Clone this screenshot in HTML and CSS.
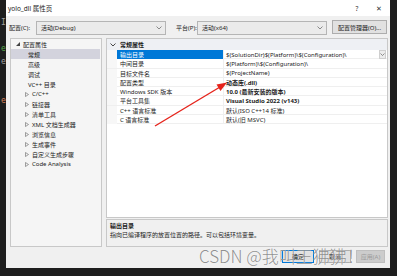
FILE: index.html
```html
<!DOCTYPE html>
<html lang="zh-CN">
<head>
    <meta charset="UTF-8">
    <title>yolo_dll 属性页</title>
    <link rel="stylesheet" href="styles.css">
</head>
<body>
<div class="screen">
    <div class="editor-edge">
        <span class="code">I</span>
        <span class="code"></span>
        <span class="code green">e</span>
        <span class="code">e</span>
        <span class="code"></span>
        <span class="code"></span>
        <span class="code orange">e</span>
    </div>

    <div class="dialog">
        <div class="titlebar">
            <span class="title">yolo_dll 属性页</span>
            <span class="tb-btn help">?</span>
            <span class="tb-btn close">✕</span>
        </div>

        <div class="toolbar">
            <span class="tb-label">配置(C):</span>
            <div class="combo">
                <span>活动(Debug)</span>
                <svg class="chev" width="6" height="4" viewBox="0 0 6 4"><path d="M0.5 0.5 L3 3 L5.5 0.5" fill="none" stroke="#707070" stroke-width="0.8"/></svg>
            </div>
            <span class="tb-label platform">平台(P):</span>
            <div class="combo">
                <span>活动(x64)</span>
                <svg class="chev" width="6" height="4" viewBox="0 0 6 4"><path d="M0.5 0.5 L3 3 L5.5 0.5" fill="none" stroke="#707070" stroke-width="0.8"/></svg>
            </div>
            <button class="btn manager">配置管理器(O)...</button>
        </div>

        <div class="main">
            <ul class="tree">
                <li class="node root">
                    <svg class="expander" width="4" height="4" viewBox="0 0 4 4"><polygon points="4,0 4,4 0,4" fill="#444"/></svg>
                    配置属性
                </li>
                <li class="node leaf selected">常规</li>
                <li class="node leaf">高级</li>
                <li class="node leaf">调试</li>
                <li class="node leaf">VC++ 目录</li>
                <li class="node branch"><svg class="expander" width="4" height="5" viewBox="0 0 4 5"><polygon points="0.5,0.5 3.5,2.5 0.5,4.5" fill="none" stroke="#777" stroke-width="0.7"/></svg>C/C++</li>
                <li class="node branch"><svg class="expander" width="4" height="5" viewBox="0 0 4 5"><polygon points="0.5,0.5 3.5,2.5 0.5,4.5" fill="none" stroke="#777" stroke-width="0.7"/></svg>链接器</li>
                <li class="node branch"><svg class="expander" width="4" height="5" viewBox="0 0 4 5"><polygon points="0.5,0.5 3.5,2.5 0.5,4.5" fill="none" stroke="#777" stroke-width="0.7"/></svg>清单工具</li>
                <li class="node branch"><svg class="expander" width="4" height="5" viewBox="0 0 4 5"><polygon points="0.5,0.5 3.5,2.5 0.5,4.5" fill="none" stroke="#777" stroke-width="0.7"/></svg>XML 文档生成器</li>
                <li class="node branch"><svg class="expander" width="4" height="5" viewBox="0 0 4 5"><polygon points="0.5,0.5 3.5,2.5 0.5,4.5" fill="none" stroke="#777" stroke-width="0.7"/></svg>浏览信息</li>
                <li class="node branch"><svg class="expander" width="4" height="5" viewBox="0 0 4 5"><polygon points="0.5,0.5 3.5,2.5 0.5,4.5" fill="none" stroke="#777" stroke-width="0.7"/></svg>生成事件</li>
                <li class="node branch"><svg class="expander" width="4" height="5" viewBox="0 0 4 5"><polygon points="0.5,0.5 3.5,2.5 0.5,4.5" fill="none" stroke="#777" stroke-width="0.7"/></svg>自定义生成步骤</li>
                <li class="node branch"><svg class="expander" width="4" height="5" viewBox="0 0 4 5"><polygon points="0.5,0.5 3.5,2.5 0.5,4.5" fill="none" stroke="#777" stroke-width="0.7"/></svg>Code Analysis</li>
            </ul>

            <div class="props">
                <div class="grid">
                    <div class="cat">
                        <svg class="cat-chev" width="6" height="4" viewBox="0 0 6 4"><path d="M0.5 0.5 L3 3 L5.5 0.5" fill="none" stroke="#333" stroke-width="0.9"/></svg>
                        <span>常规属性</span>
                    </div>
                    <div class="row selected">
                        <span class="gutter"></span>
                        <span class="name">输出目录</span>
                        <span class="value">$(SolutionDir)$(Platform)\$(Configuration)\</span>
                        <span class="drop"><svg width="5" height="3" viewBox="0 0 5 3"><path d="M0.5 0.5 L2.5 2.5 L4.5 0.5" fill="none" stroke="#666" stroke-width="0.7"/></svg></span>
                    </div>
                    <div class="row">
                        <span class="gutter"></span>
                        <span class="name">中间目录</span>
                        <span class="value">$(Platform)\$(Configuration)\</span>
                    </div>
                    <div class="row">
                        <span class="gutter"></span>
                        <span class="name">目标文件名</span>
                        <span class="value">$(ProjectName)</span>
                    </div>
                    <div class="row">
                        <span class="gutter"></span>
                        <span class="name">配置类型</span>
                        <span class="value bold">动态库(.dll)</span>
                    </div>
                    <div class="row">
                        <span class="gutter"></span>
                        <span class="name">Windows SDK 版本</span>
                        <span class="value bold">10.0 (最新安装的版本)</span>
                    </div>
                    <div class="row">
                        <span class="gutter"></span>
                        <span class="name">平台工具集</span>
                        <span class="value bold">Visual Studio 2022 (v143)</span>
                    </div>
                    <div class="row">
                        <span class="gutter"></span>
                        <span class="name">C++ 语言标准</span>
                        <span class="value">默认(ISO C++14 标准)</span>
                    </div>
                    <div class="row">
                        <span class="gutter"></span>
                        <span class="name">C 语言标准</span>
                        <span class="value">默认(旧 MSVC)</span>
                    </div>
                </div>
                <div class="desc">
                    <div class="desc-title">输出目录</div>
                    <div class="desc-text">指向已编译程序的放置位置的路径。可以包括环境变量。</div>
                </div>
            </div>
        </div>

        <div class="footer">
            <button class="btn ok">确定</button>
            <button class="btn">取消</button>
            <button class="btn disabled">应用(A)</button>
        </div>
    </div>

    <div class="editor-edge right"></div>

    <!-- annotation drawn over the screenshot -->
    <svg class="arrow" width="397" height="276" viewBox="0 0 397 276">
        <line x1="155" y1="126" x2="220" y2="87" stroke="#e5231b" stroke-width="1.4"/>
        <polygon points="227,82.5 216.5,84.5 220.5,91" fill="#e5231b"/>
    </svg>
    <div class="watermark">CSDN @我叫王狒狒！</div>
</div>
</body>
</html>
```

FILE: styles.css
```css
body {
    margin: 0;
    background: #1e1e1e;
    font-family: "Noto Sans", "Noto Sans CJK SC", sans-serif;
    font-size: 6px;
    color: #1b1b1b;
}
.screen {
    position: relative;
    width: 397px;
    height: 276px;
    display: flex;
    overflow: hidden;
}
.editor-edge {
    width: 6px;
    flex-shrink: 0;
    display: flex;
    flex-direction: column;
    padding-top: 16px;
    overflow: hidden;
    font-family: "DejaVu Sans Mono", monospace;
    font-size: 8px;
    line-height: 13px;
}
.editor-edge.right {
    width: 7px;
}
.code {
    height: 13px;
    color: #a0a0a0;
    padding-left: 1px;
}
.code.green {
    color: #57a64a;
}
.code.orange {
    color: #d6805a;
}
.dialog {
    width: 384px;
    height: 268px;
    flex-shrink: 0;
    background: #f0f0f0;
    display: flex;
    flex-direction: column;
}
.titlebar {
    height: 16px;
    background: #fff;
    display: flex;
    align-items: center;
    padding-left: 2px;
    font-size: 6.5px;
}
.tb-btn {
    width: 22px;
    text-align: center;
    color: #333;
}
.help {
    margin-left: auto;
}
.close {
    font-size: 7px;
}
.toolbar {
    height: 15px;
    margin-top: 4px;
    padding-left: 3px;
    display: flex;
    align-items: center;
}
.tb-label {
    width: 27px;
}
.tb-label.platform {
    width: 21px;
    margin-left: 10px;
}
.combo {
    width: 130px;
    height: 14px;
    box-sizing: border-box;
    border: 1px solid #b5b5b5;
    background: #ebebeb;
    display: flex;
    align-items: center;
    justify-content: space-between;
    padding: 0 3px 0 4px;
}
.btn {
    font-family: inherit;
    font-size: 6px;
    color: #1b1b1b;
    height: 14px;
    box-sizing: border-box;
    border: 1px solid #adadad;
    background: #e1e1e1;
    padding: 0;
}
.btn.manager {
    width: 55px;
    margin-left: 5px;
    margin-top: -1px;
}
.main {
    height: 209px;
    margin-top: 3px;
    padding-left: 4px;
    display: flex;
    gap: 4px;
}
.tree {
    width: 92px;
    box-sizing: border-box;
    margin: 0;
    padding: 0;
    list-style: none;
    border: 1px solid #c8c8c8;
    background: #f5f5f5;
}
.node {
    height: 10px;
    display: flex;
    align-items: center;
    white-space: nowrap;
    margin-right: 1px;
}
.node.root {
    padding-left: 5px;
}
.node.root .expander {
    margin-right: 3px;
}
.node.leaf {
    padding-left: 17px;
}
.node.branch {
    padding-left: 14px;
}
.node.branch .expander {
    margin-right: 3px;
}
.node.selected {
    background: #d3d3dd;
}
.props {
    width: 282px;
    display: flex;
    flex-direction: column;
    gap: 1px;
}
.grid {
    height: 180px;
    box-sizing: border-box;
    border: 1px solid #c8c8c8;
    background: #fff;
}
.cat {
    height: 11px;
    display: flex;
    align-items: center;
    background: #eef0f4;
    font-weight: bold;
    padding-left: 3px;
}
.cat-chev {
    margin-right: 4px;
}
.row {
    height: 9.3px;
    display: grid;
    grid-template-columns: 10px 107px 1fr auto;
    align-items: stretch;
    border-bottom: 1px solid #efefef;
    box-sizing: border-box;
    white-space: nowrap;
}
.row .gutter {
    background: #f7f7f7;
}
.row .name {
    padding-left: 3px;
    display: flex;
    align-items: center;
    border-right: 1px solid #efefef;
}
.row .value {
    padding-left: 2px;
    display: flex;
    align-items: center;
}
.row .bold {
    font-weight: bold;
}
.row.selected .name {
    background: #0078d7;
    color: #fff;
}
.drop {
    width: 7px;
    margin-right: 1px;
    display: flex;
    align-items: center;
    justify-content: center;
    border: 1px solid #cfcfcf;
    background: #ececec;
    box-sizing: border-box;
}
.desc {
    flex: 1;
    box-sizing: border-box;
    border: 1px solid #c8c8c8;
    background: #f0f0f0;
    padding: 2px 3px;
}
.desc-title {
    font-weight: bold;
    line-height: 9px;
}
.desc-text {
    line-height: 9px;
}
.footer {
    display: flex;
    justify-content: flex-end;
    gap: 5px;
    padding: 3px 5px 0 0;
}
.footer .btn {
    width: 32px;
    height: 13px;
}
.btn.ok {
    border-color: #0078d7;
}
.btn.disabled {
    width: 29px;
    background: #cccccc;
    border-color: #bfbfbf;
    color: #9a9a9a;
}
.arrow {
    position: absolute;
    left: 0;
    top: 0;
    pointer-events: none;
}
.watermark {
    position: absolute;
    left: 199px;
    top: 245px;
    font-family: "Noto Sans CJK SC", sans-serif;
    font-weight: 300;
    font-size: 17px;
    line-height: 22px;
    color: rgba(115, 115, 115, 0.8);
    text-shadow: 0 0 1px rgba(255, 255, 255, 0.9);
    white-space: nowrap;
}
```
